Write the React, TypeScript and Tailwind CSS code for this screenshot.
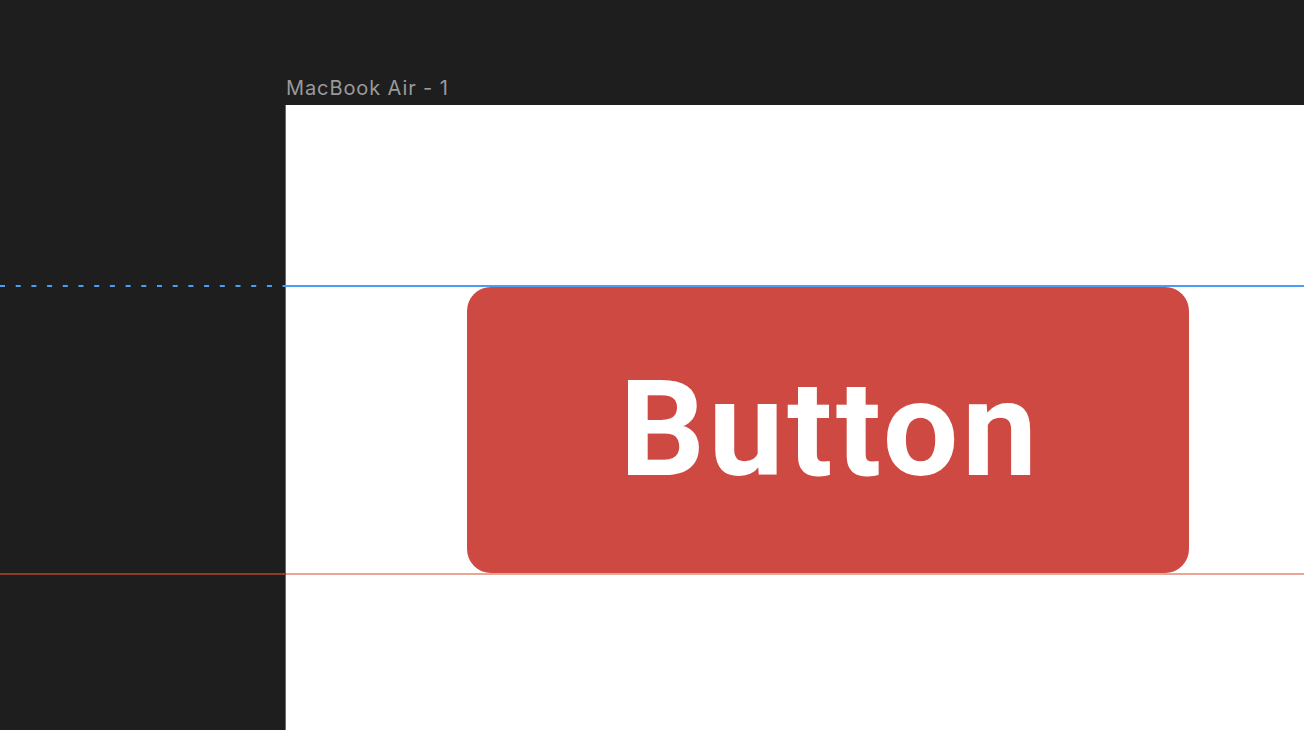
export default function App() {
  return (
    <main className="relative h-[730px] w-[1304px] overflow-hidden bg-[#1e1e1e] font-['Inter',sans-serif]">
      {/* Frame label + artboard */}
      <div className="pl-[285px] pt-[76px]">
        <div className="h-[29px] pl-[1px] text-[20px] leading-[24px] tracking-[0.9px] text-[#9a9a9a]">MacBook Air - 1</div>
        <div className="h-[640px] w-[1100px] border-l border-[#6b6b6b] bg-white pl-[181px] pt-[182px]">
          <button className="flex h-[286px] w-[722px] items-center justify-center rounded-[24px] bg-[#cd4942] pl-[4px] font-['Roboto',sans-serif] text-[134px] font-bold leading-none tracking-[3.5px] text-white">
            Button
          </button>
        </div>
      </div>

      {/* Guides */}
      <div className="pointer-events-none absolute left-0 top-[285px] flex h-[2px] w-full">
        <svg width="286" height="2" className="block shrink-0">
          <line x1="0" y1="1" x2="286" y2="1" stroke="#4a9ff5" strokeWidth="2" strokeDasharray="5 10.7" />
        </svg>
        <div className="h-full flex-1 bg-[#4a9ff5]" />
      </div>
      <div className="pointer-events-none absolute left-0 top-[573px] flex h-[2px] w-full">
        <div className="h-full w-[286px] border-t-2 border-[#8e3b2c]" />
        <div className="h-full flex-1 border-t-2 border-[#eaa594]" />
      </div>
    </main>
  );
}
